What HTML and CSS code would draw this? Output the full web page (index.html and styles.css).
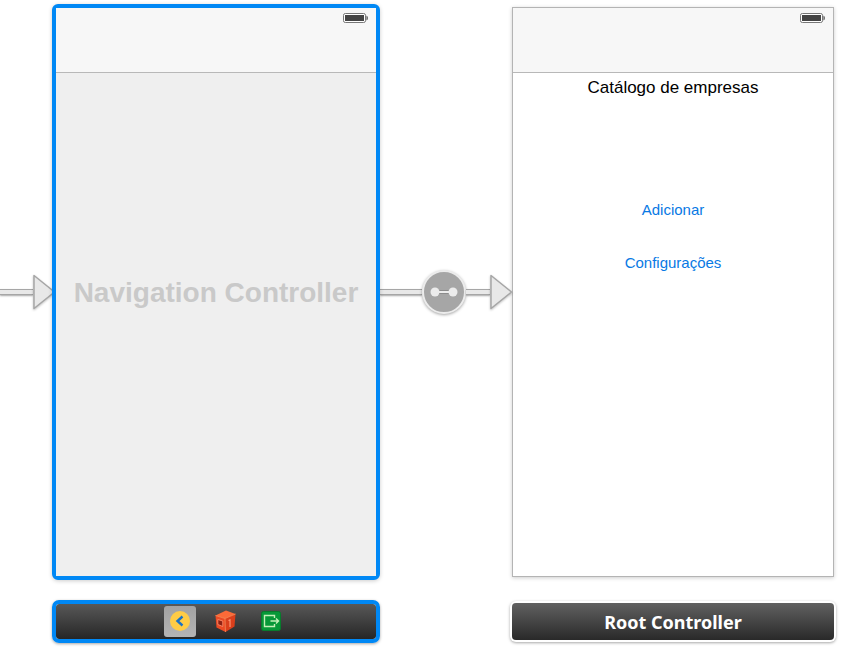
FILE: index.html
```
<!DOCTYPE html>
<html lang="pt">
<head>
    <meta charset="UTF-8">
    <meta name="viewport" content="width=device-width, initial-scale=1.0">
    <title>Storyboard</title>
    <link rel="stylesheet" href="styles.css">
</head>
<body>

    <main class="board">

        <!-- Entry point -->
        <div class="segue entry">
            <span class="shaft"></span>
            <svg class="arrowhead" width="22" height="36" viewBox="0 0 22 36">
                <path d="M1 1.5 L21.5 18 L1 34.5 Z" />
            </svg>
        </div>

        <section class="scene selected">
            <div class="phone">
                <div class="navbar">
                    <svg class="battery" width="25" height="10" viewBox="0 0 25 10">
                        <rect x="0.5" y="0.5" width="22" height="9" rx="1.8" fill="#fff" stroke="#777" />
                        <rect x="2" y="2" width="19" height="6" fill="#444" />
                        <path d="M23.4 2.5 Q25 3 25 5 T23.4 7.5 Z" fill="#666" />
                    </svg>
                </div>
                <div class="placeholder">Navigation Controller</div>
            </div>
            <div class="dock tools">
                <button class="tool active" aria-label="View controller">
                    <svg width="22" height="22" viewBox="0 0 22 22">
                        <circle cx="11" cy="10" r="10" fill="#ffcc45" />
                        <path d="M13.5 5.5 L8.5 10 L13.5 14.5" fill="none" stroke="#1a72c4" stroke-width="2.4" />
                    </svg>
                </button>
                <button class="tool" aria-label="First responder">
                    <svg width="22" height="24" viewBox="0 0 22 24">
                        <path d="M0.5 5.5 L11 0.5 L20.5 4 L10 8.5 Z" fill="#fb6a38" />
                        <path d="M0.5 5.5 L10 8.5 L10.5 22 L1.5 17.5 Z" fill="#ea4a24" />
                        <path d="M10 8.5 L20.5 4 L19.5 16.5 L10.5 22 Z" fill="#da3f1c" />
                        <path d="M0.5 5.5 L10 8.5 L20.5 4 M10 8.5 L10.5 22" fill="none" stroke="#ff8a55" stroke-width="0.8" />
                        <path d="M2.8 9.5 L7.8 11 V16.5 L2.8 14.5 Z" fill="#8d2113" stroke="#ff8a68" stroke-width="0.9" />
                        <path d="M13.5 10.5 L15 9.8 V17" fill="none" stroke="#ff9a78" stroke-width="1.1" />
                    </svg>
                </button>
                <button class="tool" aria-label="Exit">
                    <svg width="22" height="22" viewBox="0 0 22 22">
                        <rect x="0.5" y="0.5" width="19" height="19" rx="2" fill="#079838" stroke="#077c2c" />
                        <path d="M13.5 7 V4.5 H3.5 V15.5 H13.5 V13" fill="none" stroke="#c4f0b8" stroke-width="1.4" />
                        <path d="M9.5 10 H17.5 M15 7.5 L17.5 10 L15 12.5" fill="none" stroke="#c4f0b8" stroke-width="1.4" />
                    </svg>
                </button>
            </div>
        </section>

        <!-- Root view controller relationship -->
        <div class="segue">
            <span class="shaft long"></span>
            <button class="segue-node" aria-label="Root view controller">
                <svg width="28" height="12" viewBox="0 0 28 12">
                    <path d="M5 6 H23" stroke="#8c8c8c" stroke-width="4" />
                    <circle cx="5" cy="6" r="4.5" fill="#ececec" />
                    <circle cx="23" cy="6" r="4.5" fill="#ececec" />
                    <path d="M5 6 H23" stroke="#ececec" stroke-width="2" />
                </svg>
            </button>
            <span class="shaft"></span>
            <svg class="arrowhead" width="22" height="36" viewBox="0 0 22 36">
                <path d="M1 1.5 L21.5 18 L1 34.5 Z" />
            </svg>
        </div>

        <section class="scene">
            <div class="phone">
                <div class="navbar">
                    <svg class="battery" width="25" height="10" viewBox="0 0 25 10">
                        <rect x="0.5" y="0.5" width="22" height="9" rx="1.8" fill="#fff" stroke="#777" />
                        <rect x="2" y="2" width="19" height="6" fill="#444" />
                        <path d="M23.4 2.5 Q25 3 25 5 T23.4 7.5 Z" fill="#666" />
                    </svg>
                </div>
                <div class="content">
                    <h1>Catálogo de empresas</h1>
                    <button class="link">Adicionar</button>
                    <button class="link">Configurações</button>
                </div>
            </div>
            <div class="dock">Root Controller</div>
        </section>

    </main>

</body>
</html>
```

FILE: styles.css
```
* {
    box-sizing: border-box;
}
body {
    margin: 0;
    background-color: #fff;
    font-family: "Liberation Sans", Arial, sans-serif;
    color: #000;
}
button {
    padding: 0;
    border: none;
    background: none;
    font-family: inherit;
    cursor: pointer;
}
svg {
    display: block;
    flex-shrink: 0;
}
.board {
    display: grid;
    grid-template-columns: 52px 328fr 132px 322fr;
    min-height: 100vh;
    padding-right: 17px;
}

/* Scenes */
.scene {
    display: flex;
    flex-direction: column;
    gap: 26px;
    padding: 7px 0 11px;
}
.phone {
    flex: 1;
    display: flex;
    flex-direction: column;
    background-color: #fff;
    border: 1px solid #b4b4b4;
    box-shadow: 0 1px 4px rgba(0, 0, 0, 0.2);
}
.navbar {
    display: flex;
    justify-content: flex-end;
    height: 65px;
    padding: 5px 8px;
    background-color: #f7f7f7;
    border-bottom: 1px solid #b8b8b8;
}
.content {
    display: flex;
    flex-direction: column;
    align-items: center;
}
.content h1 {
    margin: 0 0 98px;
    font-size: 17px;
    font-weight: normal;
    line-height: 30px;
}
.link {
    margin-bottom: 35px;
    font-size: 15px;
    line-height: 18px;
    color: #0879e4;
}
.placeholder {
    flex: 1;
    display: flex;
    justify-content: center;
    padding-top: 204px;
    font-size: 28px;
    font-weight: bold;
    line-height: 32px;
    white-space: nowrap;
    color: #c9c9c9;
    background-color: #efefef;
}
.dock {
    display: flex;
    align-items: center;
    justify-content: center;
    height: 37px;
    border-radius: 4px;
    background: linear-gradient(#616161, #292929);
    box-shadow: 0 0 0 2px #fff, 0 1px 3px 2px rgba(0, 0, 0, 0.35);
    font-family: "Noto Sans", "Open Sans", sans-serif;
    font-size: 18px;
    font-weight: bold;
    line-height: 24px;
    color: #fff;
}

/* Selected scene */
.selected {
    position: relative;
    gap: 20px;
    padding: 4px 0 8px;
}
.selected .phone {
    border: 4px solid #0088f5;
    border-radius: 6px;
}
.selected .dock {
    height: 43px;
    border: 4px solid #0088f5;
    border-radius: 7px;
    background: linear-gradient(#585858, #262626) padding-box;
    box-shadow: 0 1px 3px rgba(0, 0, 0, 0.35);
}
.tools {
    gap: 14px;
    padding-left: 20px;
}
.tool {
    display: flex;
    align-items: center;
    justify-content: center;
    width: 32px;
    height: 31px;
    border-radius: 3px;
}
.tool.active {
    background: linear-gradient(#a2a2a2, #b4b4b4);
}

/* Connections between scenes */
.segue {
    display: flex;
    align-items: center;
    padding: 4px 0 71px;
}
.entry .arrowhead {
    margin-right: -3px;
}
.shaft {
    flex: 4;
    height: 6px;
    background-color: #e8e8e8;
    border: solid #a6a6a6;
    border-width: 1px 0;
    box-shadow: 0 1px 2px rgba(0, 0, 0, 0.35);
}
.shaft.long {
    flex: 7;
}
.arrowhead {
    overflow: visible;
    fill: #e8e8e8;
    stroke: #a6a6a6;
    stroke-width: 1.5;
    stroke-linejoin: round;
    filter: drop-shadow(0 1px 1px rgba(0, 0, 0, 0.25));
}
.segue-node {
    display: flex;
    align-items: center;
    justify-content: center;
    width: 44px;
    height: 44px;
    border: 2px solid #ececec;
    border-radius: 50%;
    background-color: #a6a6a6;
    box-shadow: 0 1px 3px rgba(0, 0, 0, 0.35);
}
```
